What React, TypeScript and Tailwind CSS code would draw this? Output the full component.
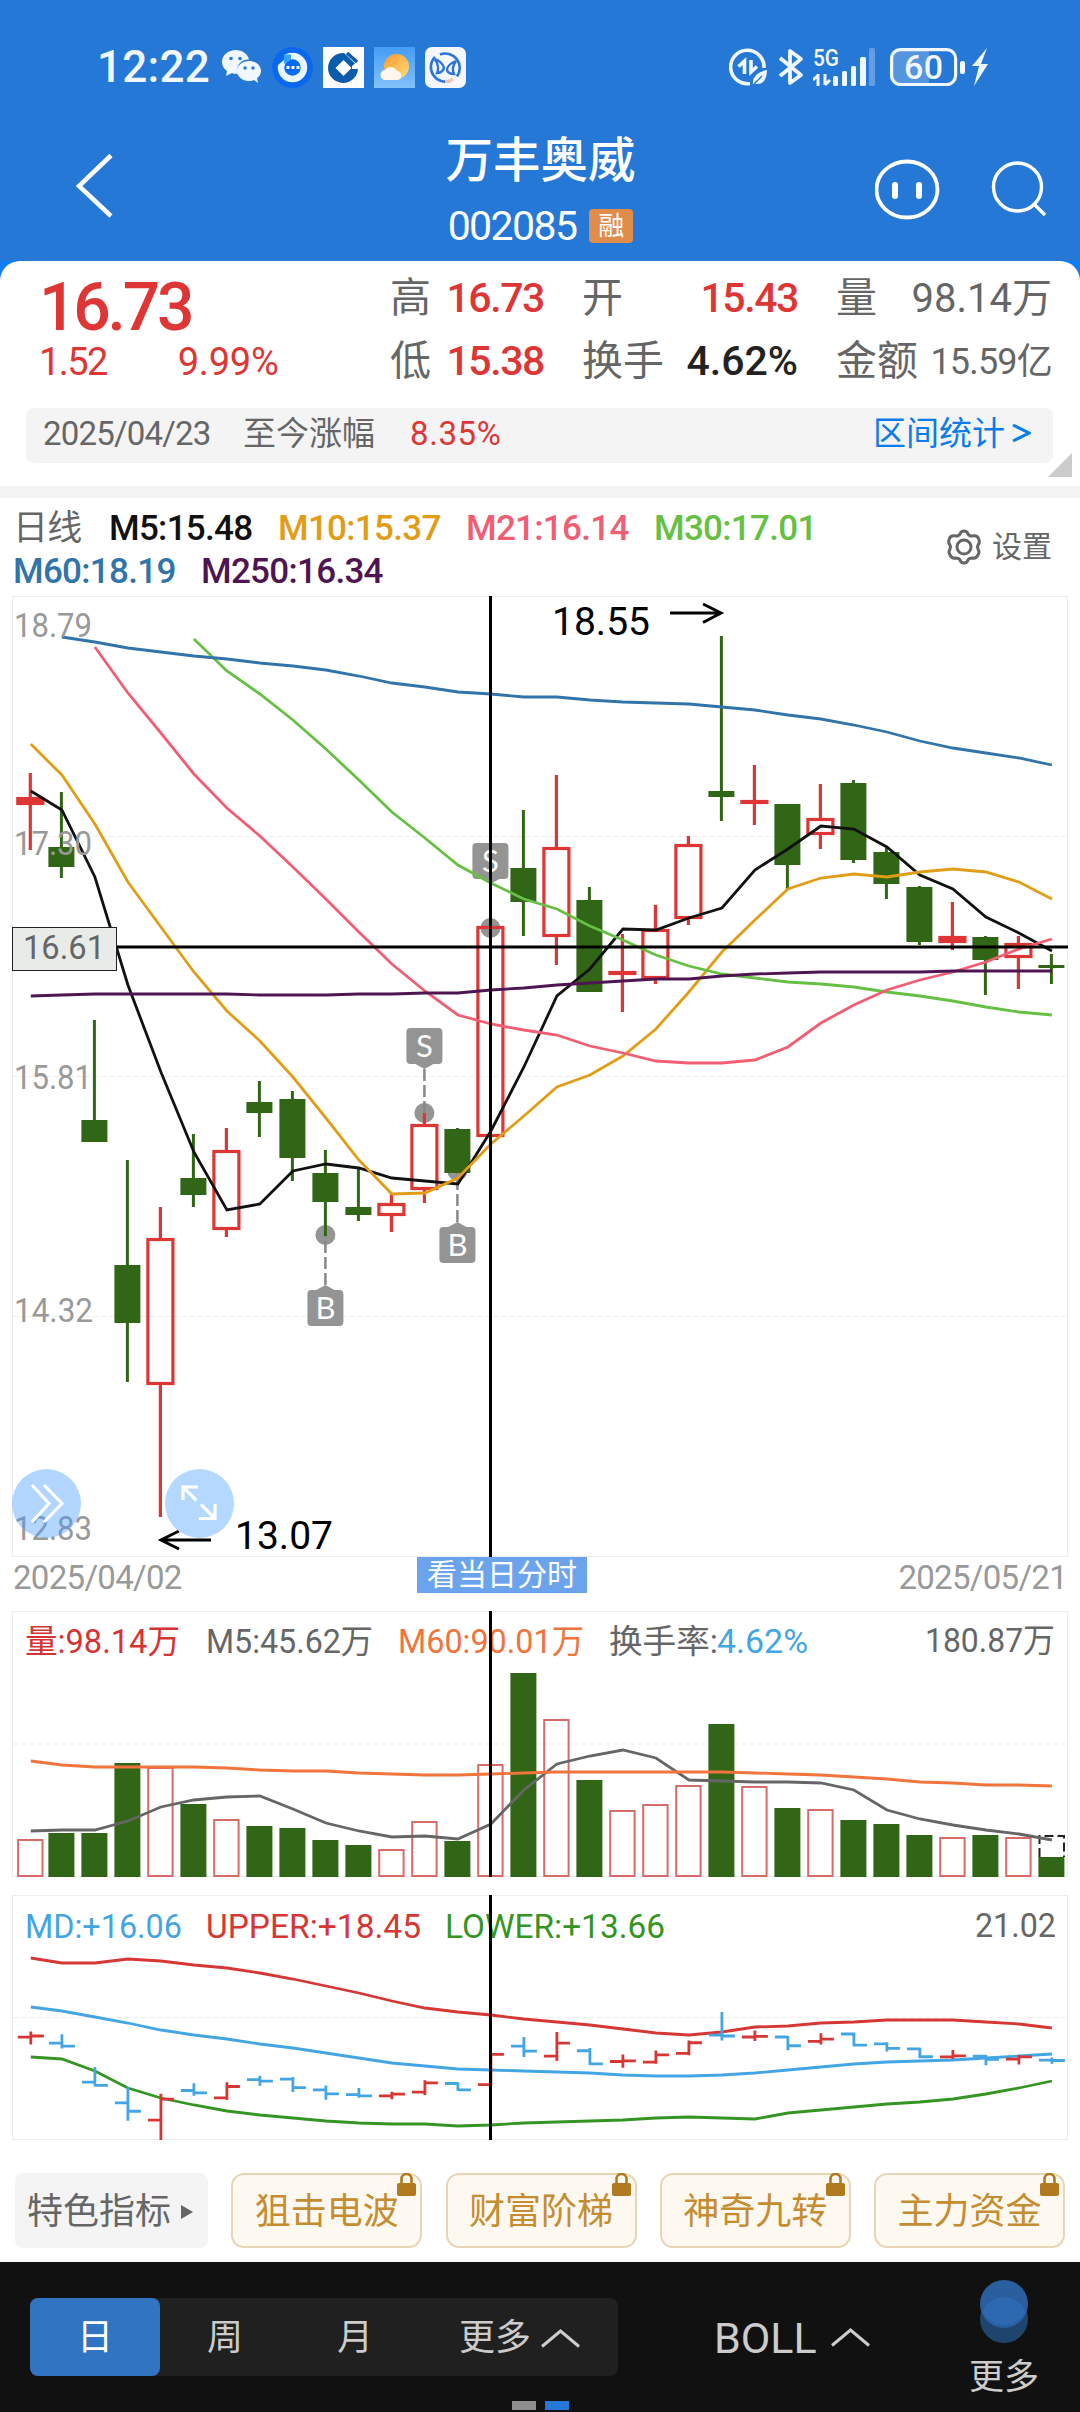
import type { ReactNode } from "react";

// [rising, high, bodyTop, bodyBottom, low] in chart coordinates
type Candle = [boolean, number, number, number, number];

const CANDLES: Candle[] = [
  [true, 773, 797, 805, 850],
  [false, 792, 847, 867, 878],
  [false, 1020, 1120, 1142, 1142],
  [false, 1160, 1265, 1323, 1382],
  [true, 1207, 1238, 1385, 1517],
  [false, 1134, 1178, 1195, 1207],
  [true, 1128, 1150, 1230, 1237],
  [false, 1081, 1102, 1113, 1137],
  [false, 1091, 1099, 1158, 1181],
  [false, 1150, 1173, 1202, 1236],
  [false, 1168, 1207, 1215, 1221],
  [true, 1194, 1203, 1216, 1232],
  [true, 1113, 1124, 1190, 1203],
  [false, 1128, 1129, 1173, 1173],
  [true, 926, 926, 1137, 1137],
  [false, 810, 868, 902, 936],
  [true, 775, 847, 937, 965],
  [false, 887, 900, 992, 992],
  [true, 934, 971, 975, 1012],
  [true, 905, 929, 979, 984],
  [true, 836, 844, 919, 925],
  [false, 636, 791, 797, 821],
  [true, 765, 800, 804, 825],
  [false, 804, 804, 865, 889],
  [true, 784, 818, 835, 849],
  [false, 780, 783, 860, 863],
  [false, 848, 852, 884, 899],
  [false, 886, 887, 942, 945],
  [true, 902, 936, 943, 950],
  [false, 936, 937, 960, 995],
  [true, 936, 943, 958, 989],
  [false, 954, 965, 968, 984],
];

const VOLUME_TOPS = [
  1839, 1833, 1833, 1763, 1767, 1804, 1819, 1826, 1828, 1840, 1845, 1849, 1821, 1841, 1764, 1673,
  1719, 1780, 1810, 1804, 1785, 1724, 1786, 1808, 1809, 1820, 1824, 1835, 1837, 1835, 1837, 1857,
];

interface Series {
  color: string;
  start: number;
  points: number[];
}

const MA_LINES: Series[] = [
  { color: "#111111", start: 0, points: [791, 810, 877, 985, 1072, 1152, 1210, 1204, 1171, 1164, 1168, 1178, 1181, 1184, 1131, 1067, 996, 969, 929, 930, 918, 908, 870, 849, 826, 829, 847, 875, 889, 917, 933, 951] },
  { color: "#e29d17", start: 0, points: [744, 775, 824, 882, 927, 972, 1011, 1041, 1077, 1118, 1160, 1194, 1193, 1178, 1144, 1116, 1087, 1075, 1056, 1029, 992, 952, 920, 889, 878, 874, 877, 872, 869, 872, 882, 899] },
  { color: "#66c043", start: 5, points: [639, 671, 694, 720, 749, 780, 812, 838, 865, 883, 899, 909, 926, 940, 955, 966, 974, 978, 982, 984, 987, 992, 996, 1001, 1007, 1012, 1015] },
  { color: "#f15e73", start: 2, points: [647, 693, 733, 774, 808, 836, 867, 899, 932, 964, 991, 1015, 1024, 1030, 1035, 1046, 1053, 1061, 1063, 1063, 1060, 1047, 1023, 1005, 990, 980, 972, 962, 949, 939] },
  { color: "#3174aa", start: 1, points: [637, 642, 648, 652, 656, 659, 663, 666, 670, 676, 683, 687, 692, 694, 697, 697, 700, 702, 703, 704, 707, 710, 715, 719, 725, 732, 741, 748, 753, 758, 765] },
  { color: "#4e1552", start: 0, points: [996, 995, 994, 994, 994, 994, 994, 995, 995, 995, 994, 994, 993, 993, 990, 988, 985, 983, 981, 979, 979, 976, 974, 973, 972, 972, 972, 972, 971, 971, 971, 971] },
];

const VOLUME_LINES: Series[] = [
  { color: "#666666", start: 0, points: [1831, 1830, 1830, 1821, 1807, 1800, 1797, 1796, 1809, 1823, 1831, 1837, 1836, 1839, 1824, 1790, 1764, 1756, 1750, 1758, 1780, 1781, 1782, 1782, 1783, 1790, 1810, 1819, 1825, 1830, 1834, 1840] },
  { color: "#f0743c", start: 0, points: [1761, 1765, 1767, 1767, 1767, 1767, 1768, 1770, 1771, 1771, 1773, 1774, 1775, 1775, 1774, 1773, 1772, 1772, 1772, 1772, 1772, 1772, 1773, 1774, 1775, 1777, 1779, 1782, 1783, 1785, 1785, 1786] },
];

const BOLL_LINES: Series[] = [
  { color: "#d63634", start: 0, points: [1958, 1963, 1963, 1959, 1961, 1965, 1968, 1973, 1979, 1986, 1993, 2001, 2008, 2012, 2015, 2019, 2022, 2025, 2029, 2033, 2035, 2032, 2027, 2026, 2023, 2022, 2020, 2020, 2020, 2022, 2024, 2028] },
  { color: "#43a5e4", start: 0, points: [2007, 2011, 2017, 2023, 2030, 2035, 2039, 2044, 2048, 2053, 2058, 2063, 2066, 2069, 2070, 2071, 2072, 2073, 2075, 2076, 2076, 2075, 2073, 2070, 2067, 2064, 2062, 2061, 2060, 2058, 2056, 2054] },
  { color: "#359523", start: 0, points: [2057, 2059, 2071, 2088, 2098, 2105, 2111, 2115, 2118, 2121, 2123, 2124, 2124, 2126, 2125, 2123, 2122, 2121, 2120, 2118, 2117, 2118, 2119, 2113, 2110, 2107, 2104, 2102, 2099, 2094, 2088, 2081] },
];

const RED = "#de3535";
const GREEN = "#306615";
const FONT = "Roboto, 'Noto Sans CJK SC', sans-serif";
const CURSOR_X = 490.5;

// the first column sits slightly right of the even 33px pitch
const xAt = (i: number) => (i === 0 ? 30.3 : 28.4 + 33 * i);
const bollY = (y: number) => 2013 + 0.143 * (y - 636);

function Lines({ series }: { series: Series[] }) {
  return (
    <>
      {series.map((s) => (
        <polyline
          key={s.color}
          fill="none"
          stroke={s.color}
          strokeWidth={2.8}
          points={s.points.map((y, i) => `${xAt(i + s.start) + 0.5},${y}`).join(" ")}
        />
      ))}
    </>
  );
}

interface LabelProps {
  x: number;
  y: number;
  width: number;
  size?: number;
  fill: string;
  weight?: number;
  children: ReactNode;
}

function Label({ x, y, width, size = 33, fill, weight = 400, children }: LabelProps) {
  return (
    <text x={x} y={y} fontSize={size} fill={fill} fontWeight={weight} fontFamily={FONT} textLength={width} lengthAdjust="spacingAndGlyphs">
      {children}
    </text>
  );
}

function Frame({ top, height, grid }: { top: number; height: number; grid: number[] }) {
  return (
    <>
      <rect x={12.5} y={top + 0.5} width={1055} height={height - 1} fill="none" stroke="#ececec" />
      {grid.map((y) => (
        <line key={y} x1={13} x2={1067} y1={y} y2={y} stroke="#ededed" strokeDasharray="5 3" />
      ))}
    </>
  );
}

function TradeMark({ index, kind, dot, box }: { index: number; kind: "B" | "S"; dot: number; box: number }) {
  const x = xAt(index);
  const edge = kind === "S" ? box + 36 : box;
  const tip = kind === "S" ? edge + 5 : edge - 5;
  return (
    <g>
      <circle cx={x} cy={dot} r={10} fill="#949494" />
      {index !== 14 && (
        <line x1={x} x2={x} y1={tip} y2={dot} stroke="#888888" strokeWidth={2.5} strokeDasharray="12 4" />
      )}
      <path d={`M${x - 9} ${edge}L${x} ${tip}L${x + 9} ${edge}z`} fill="#949494" />
      <rect x={x - 18} y={box} width={36} height={36} rx={4} fill="#949494" />
      <text x={x} y={box + 29} textAnchor="middle" fontSize={31} fill="#fff" fontFamily="Lato, sans-serif">
        {kind}
      </text>
    </g>
  );
}

function PriceChart() {
  return (
    <svg className="block h-[961px] w-[1080px]" viewBox="0 596 1080 961">
      <Frame top={596} height={961} grid={[836.5, 1076.5, 1316.5]} />
      <TradeMark index={9} kind="B" dot={1235} box={1290} />
      <TradeMark index={12} kind="S" dot={1113} box={1028} />
      <TradeMark index={13} kind="B" dot={1171} box={1227} />
      <TradeMark index={14} kind="S" dot={928} box={843} />
      {CANDLES.map(([up, high, top, bottom, low], i) => {
        const x = xAt(i);
        if (up) {
          const thin = bottom - top < 9;
          return (
            <g key={i} stroke={RED} strokeWidth={3.2}>
              <path d={`M${x} ${high}V${top}M${x} ${bottom}V${low}`} />
              <rect x={x - 12.5} y={top + 1.5} width={25} height={Math.max(bottom - top - 3, 1)} fill={thin ? RED : "none"} />
            </g>
          );
        }
        return (
          <g key={i} fill={GREEN}>
            <rect x={x - 1.5} y={high} width={3} height={low - high} />
            <rect x={x - 13} y={top} width={26} height={bottom - top} />
          </g>
        );
      })}
      <Lines series={MA_LINES} />
      <Label x={14} y={637} width={78} fill="#999">18.79</Label>
      <Label x={14} y={855} width={78} fill="#999">17.30</Label>
      <Label x={14} y={1089} width={78} fill="#999">15.81</Label>
      <Label x={14} y={1322} width={79} fill="#999">14.32</Label>
      <Label x={14} y={1540} width={78} fill="#999">12.83</Label>
      <Label x={552} y={635} width={98} size={39} fill="#000">18.55</Label>
      <path d="M670 613H721M703 604L721 613L703 622.5" fill="none" stroke="#000" strokeWidth={3} />
      <path d="M211 1540H161M179 1531L161 1540L179 1549" fill="none" stroke="#000" strokeWidth={3} />
      <Label x={235} y={1549} width={98} size={39} fill="#000">13.07</Label>
      <line x1={117} x2={1068} y1={947} y2={947} stroke="#000" strokeWidth={3} />
      <line x1={CURSOR_X} x2={CURSOR_X} y1={596} y2={1557} stroke="#000" strokeWidth={3} />
      <rect x={12.5} y={927.5} width={104} height={43} fill="#e9ebe8" stroke="#222" />
      <Label x={23} y={959} width={82} size={34} fill="#666">16.61</Label>
      <circle cx={46.5} cy={1503.5} r={34.5} fill="#3f98ff" fillOpacity={0.4} />
      <path d="M32 1485L49 1503.5L32 1522M44 1485L62 1503.5L44 1522" fill="none" stroke="#fff" strokeWidth={3.2} />
      <circle cx={199.5} cy={1503.5} r={34.5} fill="#b4d8ff" />
      <path d="M183 1500V1487H198M183 1487L196.500 1500.500M215 1504V1518.500H199M201 1504.500L215 1518.500" fill="none" stroke="#fff" strokeWidth={3.2} />
    </svg>
  );
}

function VolumeChart() {
  return (
    <svg className="block h-[266px] w-[1080px]" viewBox="0 1611 1080 266">
      <Frame top={1611} height={266} grid={[1744]} />
      {VOLUME_TOPS.map((top, i) => {
        const x = xAt(i);
        return CANDLES[i][0] ? (
          <rect key={i} x={x - 12.2} y={top + 1} width={24.4} height={1875 - top} fill="none" stroke="#d96a6a" strokeWidth={2} />
        ) : (
          <rect key={i} x={x - 13} y={top} width={26} height={1877 - top} fill={GREEN} />
        );
      })}
      <path d="M1039.500 1857V1836H1064V1857" fill="none" stroke="#222" strokeWidth={2} strokeDasharray="9 4" />
      <Lines series={VOLUME_LINES} />
      <Label x={25} y={1653} width={155} fill="#d63434">量:98.14万</Label>
      <Label x={206} y={1653} width={167} fill="#666">M5:45.62万</Label>
      <Label x={398} y={1653} width={186} fill="#f0743c">M60:90.01万</Label>
      <Label x={609} y={1653} width={109} fill="#666">换手率:</Label>
      <Label x={717} y={1653} width={91} fill="#43a5e4">4.62%</Label>
      <Label x={925} y={1652} width={130} fill="#666">180.87万</Label>
      <line x1={CURSOR_X} x2={CURSOR_X} y1={1611} y2={1877} stroke="#000" strokeWidth={3} />
    </svg>
  );
}

function BollChart() {
  return (
    <svg className="block h-[245px] w-[1080px]" viewBox="0 1895 1080 245">
      <Frame top={1895} height={245} grid={[2017.5]} />
      <Lines series={BOLL_LINES} />
      {CANDLES.map(([up, high, top, bottom, low], i) => {
        const x = xAt(i) + 0.5;
        const open = bollY(up ? bottom : top);
        const close = bollY(up ? top : bottom);
        return (
          <path
            key={i}
            d={`M${x - 13} ${open}H${x}M${x} ${close}H${x + 13}M${x} ${bollY(high) - 1}V${bollY(low) + 1}`}
            stroke={up ? "#d63634" : "#43a5e4"}
            strokeWidth={2.8}
          />
        );
      })}
      <Label x={25} y={1938} width={157} fill="#43a5e4">MD:+16.06</Label>
      <Label x={206} y={1938} width={215} fill="#d63634">UPPER:+18.45</Label>
      <Label x={445} y={1938} width={220} fill="#359523">LOWER:+13.66</Label>
      <Label x={975} y={1937} width={81} fill="#666">21.02</Label>
      <line x1={CURSOR_X} x2={CURSOR_X} y1={1895} y2={2140} stroke="#000" strokeWidth={3} />
    </svg>
  );
}

function StatusBar() {
  return (
    <div className="flex h-[134px] items-center pl-[97px] pr-[90px] text-[#f1f7ff]">
      <span className="w-[125px] text-[44px] font-medium leading-none tracking-[0.3px]">12:22</span>
      <svg className="mr-[11px] h-[34px] w-[39px]" viewBox="0 0 39 34" fill="#f1f7ff">
        <path d="M14 0C6 0 0 5 0 12c0 4 2 7 5 9l-1 5 6-3c2 1 4 1 6 .500C13 15 20 9 27 9.500 26 4 20 0 14 0z" />
        <path d="M27 11c-7 0-12 4.500-12 10s5 10 12 10c2 0 3.500-.300 5-1l4 3-1-5c3-2 4-4.500 4-7 0-5.500-5-10-12-10z" />
        <g fill="#2578d5">
          <circle cx="9" cy="8.500" r="1.800" />
          <circle cx="18" cy="8.500" r="1.800" />
          <circle cx="23" cy="18" r="1.700" />
          <circle cx="31" cy="18" r="1.700" />
        </g>
      </svg>
      <svg className="mr-[10px] size-[41px]" viewBox="0 0 41 41">
        <circle cx="20.500" cy="20.500" r="20.500" fill="#0868ee" />
        <circle cx="20.500" cy="20.500" r="11.500" fill="none" stroke="#e8f4ff" strokeWidth="6.500" />
        <path d="M12 7.500H19V13L12 17z" fill="#39a0ff" />
        <path d="M5.500 7H12V13L6 18z" fill="#0868ee" />
        <path d="M14.500 20.500h3M19.500 20.500h3M24.500 20.500h3" stroke="#fff" strokeWidth="3" />
      </svg>
      <svg className="mr-[10px] size-[41px]" viewBox="0 0 41 41">
        <path fill="#fff" d="M0 0h41v41H0z" />
        <path d="M35 22A15 15 0 1 1 21 6L32 16.500L29 19V22z" fill="#0b5dab" />
        <path d="M20.500 13L28.500 21L20.500 29L12.500 21z" fill="#fff" />
        <path d="M24 6L34 15" stroke="#0b5dab" strokeWidth="3.500" />
      </svg>
      <svg className="mr-[10px] size-[41px]" viewBox="0 0 41 41">
        <defs>
          <linearGradient id="sky" x2="0" y2="1">
            <stop stopColor="#459df5" />
            <stop offset="1" stopColor="#83c2fb" />
          </linearGradient>
          <linearGradient id="sun" x2="1" y2="1">
            <stop stopColor="#ff9a2e" />
            <stop offset="1" stopColor="#ffdc7a" />
          </linearGradient>
        </defs>
        <path fill="url(#sky)" d="M0 0h41v41H0z" />
        <circle cx="22.500" cy="19.500" r="12.500" fill="url(#sun)" />
        <path d="M12 33a5 5 0 0 1-1-10 7 7 0 0 1 12 1 4.500 4.500 0 0 1 0 9z" fill="#fff6ec" />
      </svg>
      <svg className="size-[41px]" viewBox="0 0 41 41">
        <rect width="41" height="41" rx="7" fill="#f4f7fc" />
        <path d="M15 7.500a14.500 14.500 0 0 1 17 22M26 33.500A14.500 14.500 0 0 1 10 10" fill="none" stroke="#2e73da" strokeWidth="2.600" />
        <path d="M10 12c5 2 8 5 9 9-1 3-3 5-7 5q3-6-2-14M31 14c-5 2-9 5-9 9 1 3 3 4 7 4q-3-6 2-13" fill="none" stroke="#2e73da" strokeWidth="2.400" />
        <path d="M20 34.500q5 0 8-2.500" stroke="#f2c7ad" strokeWidth="3" fill="none" />
      </svg>
      <svg className="ml-auto mr-[11px] h-[38px] w-[38px]" viewBox="0 0 38 38" fill="none" stroke="#f1f7ff">
        <path d="M21 35.500A16.700 16.700 0 1 1 35 20" strokeWidth="3.600" />
        <path d="M15.500 26V13L9.500 18.500M22 12v12l6-5.500" strokeWidth="3.600" />
        <path d="M24 36q-1-11 14-14-.500 15-11 14z" fill="#f1f7ff" stroke="none" />
        <path d="M25 36l8-8" stroke="#2578d5" strokeWidth="1.500" />
      </svg>
      <svg className="mr-[9px] h-[38px] w-[26px]" viewBox="0 0 26 38">
        <path d="M2 10L23 27L12 35V3L23 11L2 28" fill="none" stroke="#f1f7ff" strokeWidth="3.800" strokeLinejoin="round" />
      </svg>
      <svg className="mr-[15px] h-[54px] w-[62px]" viewBox="0 -8 62 54" fill="#f1f7ff">
        <text x="0" y="18" fontSize="24" fontWeight="500" fontFamily={FONT} textLength="26" lengthAdjust="spacingAndGlyphs">5G</text>
        <path d="M5 26v12M0 32l5.500-5M12 26v11M12 37l5-5" stroke="#f1f7ff" strokeWidth="3" />
        <rect x="20" y="28" width="5" height="10" rx="1.500" />
        <rect x="29" y="23" width="5" height="15" rx="1.500" />
        <rect x="38" y="18" width="5" height="20" rx="1.500" />
        <rect x="47" y="9" width="6" height="29" rx="1.500" />
        <rect x="56" y="0" width="6" height="38" rx="1.500" opacity="0.300" />
      </svg>
      <svg className="h-[38px] w-[100px]" viewBox="0 0 100 38">
        <path d="M10 2h29v34H10a8 8 0 0 1-8-8V10a8 8 0 0 1 8-8z" fill="#fff" opacity="0.220" />
        <rect x="1.600" y="1.600" width="64" height="35" rx="9" fill="none" stroke="#f1f7ff" strokeWidth="3.200" />
        <text x="14" y="31" fontSize="34" fontWeight="500" fill="#f1f7ff" fontFamily={FONT} textLength="39">60</text>
        <rect x="70" y="13" width="5" height="13" rx="2" fill="#f1f7ff" />
        <path d="M97 0L82 18h7l-5 20 14-22h-7z" fill="#f1f7ff" />
      </svg>
    </div>
  );
}

function TitleBar() {
  return (
    <div className="flex h-[127px] items-start justify-between pl-[76px] pr-[33px] text-white">
      <svg className="mt-[19px] h-[66px] w-[295px]" viewBox="0 0 295 66">
        <path d="M35 2.500L3 33L35 63" fill="none" stroke="#fff" strokeWidth="4.500" />
      </svg>
      <div className="flex flex-col items-center">
        <h1 className="text-[47.500px] font-medium leading-[54px]">万丰奥威</h1>
        <div className="mt-[16px] flex items-center gap-[13px]">
          <span className="text-[41px] leading-[44px] tracking-[-1.600px]">002085</span>
          <span className="flex h-[34px] w-[44px] items-center justify-center rounded-sm bg-[#e08c4a] text-[26px] leading-none">融</span>
        </div>
      </div>
      <div className="flex w-[337px] justify-end">
        <svg className="mt-[25px] h-[61px] w-[172px]" viewBox="0 0 172 61" fill="none" stroke="#fff">
          <ellipse cx="32" cy="30.500" rx="30.500" ry="28" strokeWidth="3.800" />
          <path d="M20 26v11M44 26v11" strokeWidth="6" strokeLinecap="round" />
          <circle cx="142.500" cy="28" r="24" strokeWidth="3.400" />
          <path d="M159 45L170 56" strokeWidth="3.400" />
        </svg>
      </div>
    </div>
  );
}

interface StatProps {
  label: string;
  value: string;
  tone: string;
}

function Stat({ label, value, tone }: StatProps) {
  return (
    <div className="flex h-[63px] items-center justify-between whitespace-nowrap text-[41px] leading-none text-[#666]">
      <span>{label}</span>
      <span className={tone}>{value}</span>
    </div>
  );
}

function QuotePanel() {
  return (
    <section className="bg-[#0d7ef5]">
      <div className="h-[225px] rounded-t-[20px] bg-white">
        <div className="flex h-[147px] pt-[6px]">
          <div className="w-[390px] pl-[39px] text-[#de3535]">
            <p className="pt-[5px] text-[66px] font-medium leading-[72px] tracking-[-3.200px]">16.73</p>
            <p className="flex gap-[71px] text-[38px] leading-[37px]">
              <span className="tracking-[-1.600px]">1.52</span>
              <span className="tracking-[-0.200px]">9.99%</span>
            </p>
          </div>
          <div className="w-[154px]">
            <Stat label="高" value="16.73" tone="tracking-[-1.400px] font-medium text-[#de3535]" />
            <Stat label="低" value="15.38" tone="tracking-[-1.400px] font-medium text-[#de3535]" />
          </div>
          <div className="ml-[38px] w-[216px]">
            <Stat label="开" value="15.43" tone="tracking-[-1.400px] font-medium text-[#de3535]" />
            <Stat label="换手" value="4.62%" tone="tracking-[0px] font-medium text-[#222]" />
          </div>
          <div className="ml-[38px] w-[216px]">
            <Stat label="量" value="98.14万" tone="tracking-[0px] text-[40px]" />
            <Stat label="金额" value="15.59亿" tone="tracking-[-0.800px] text-[36px]" />
          </div>
        </div>
        <div className="flex">
          <div className="ml-[26px] flex h-[55px] w-[1027px] items-center rounded-lg bg-[#f4f4f4] pb-[5px] pl-[17px] pr-[22px] text-[33px] leading-none text-[#666]">
            <span className="w-[200px] tracking-[-0.800px]">2025/04/23</span>
            <span className="w-[167px]">至今涨幅</span>
            <span className="tracking-[0.600px] text-[#de3535]">8.35%</span>
            <span className="ml-auto text-[#0b7cea]">区间统计</span>
            <svg className="ml-[7px] h-[20px] w-[19px]" viewBox="0 0 19 20">
              <path d="M1 2L17 10L1 18" fill="none" stroke="#0b7cea" strokeWidth="3" />
            </svg>
          </div>
          <svg className="-ml-[5px] mt-[45px] h-[24px] w-[24px]" viewBox="0 0 24 24">
            <path d="M24 0V24H0z" fill="#ccc" />
          </svg>
        </div>
      </div>
      <div className="h-[12px] bg-[#f4f4f4]" />
    </section>
  );
}

function MaLegend() {
  return (
    <section className="flex h-[98px] justify-between bg-white pl-[13px] pr-[28px]">
      <div className="whitespace-nowrap pt-[9px] text-[35px] font-medium leading-[43px] tracking-[-0.700px]">
        <div className="flex">
          <span className="w-[96px] font-normal text-[#666]">日线</span>
          <span className="w-[169px] text-[#111]">M5:15.48</span>
          <span className="w-[188px] text-[#e29d17]">M10:15.37</span>
          <span className="w-[188px] text-[#f15e73]">M21:16.14</span>
          <span className="text-[#66c043]">M30:17.01</span>
        </div>
        <div className="flex">
          <span className="w-[188px] text-[#3174aa]">M60:18.19</span>
          <span className="text-[#4e1552]">M250:16.34</span>
        </div>
      </div>
      <div className="flex items-center gap-[10px] text-[30px] leading-none text-[#666]">
        <svg className="h-[36px] w-[36px]" viewBox="0 0 36 36" fill="none" stroke="#666" strokeWidth="3">
          <path d="M18 2q3 0 4 3 1 2 4 2 6-1 7 4 1 3-1 5-1 2 0 4 2 3 0 6-2 4-6 3-3 0-4 2-1 3-4 3t-4-3q-1-2-4-2-4 1-6-3-2-3 0-6 1-2 0-4-2-2-1-5 1-5 7-4 3 0 4-2 1-3 4-3z" strokeLinejoin="round" />
          <circle cx="18" cy="18" r="7" />
        </svg>
        设置
      </div>
    </section>
  );
}

function LockedButton({ children }: { children: ReactNode }) {
  return (
    <button className="relative h-[75px] w-[191px] rounded-[13px] border-2 border-[#e8d5b5] bg-[#fdf9f1] pt-[2px] text-[36px] leading-none text-[#c58c30]">
      {children}
      <svg className="absolute -top-[2px] right-[4px] h-[23px] w-[19px]" viewBox="0 0 19 23">
        <path d="M4.500 11V6a5 5 0 0 1 10 0v5" fill="none" stroke="#b17a20" strokeWidth="2.600" />
        <rect y="10" width="19" height="13" rx="2" fill="#b17a20" />
      </svg>
    </button>
  );
}

function Caret() {
  return (
    <svg className="h-[19px] w-[39px]" viewBox="0 0 39 19">
      <path d="M1 17.500L19.500 2L38 17.500" fill="none" stroke="#ccc" strokeWidth="3" />
    </svg>
  );
}

function BottomBar() {
  return (
    <footer className="h-[150px] overflow-hidden bg-[#111]">
      <div className="flex h-[139px] pl-[30px] text-[36px] leading-none text-[#ccc]">
        <div className="mt-[36px] flex h-[78px] w-[588px] items-center rounded-lg bg-[#202020]">
          <button className="h-[78px] w-[130px] rounded-lg bg-[#3074c2] pt-[2px] text-white">日</button>
          <button className="w-[130px] pt-[2px]">周</button>
          <button className="w-[130px] pt-[2px]">月</button>
          <button className="ml-[39px] flex items-center gap-[10px] pt-[2px]">
            更多
            <Caret />
          </button>
        </div>
        <button className="ml-[96px] mt-[36px] flex h-[78px] items-center gap-[10px] text-[43px]">
          <span className="w-[107px] pt-[2px] text-left">BOLL</span>
          <Caret />
        </button>
        <button className="ml-[96px] flex w-[76px] flex-col items-center pt-[18px]">
          <svg className="h-[63px] w-[48px] shrink-0" viewBox="0 0 48 63">
            <circle cx="24" cy="39" r="24" fill="#1f456e" />
            <circle cx="24" cy="24" r="24" fill="#295f9f" />
            <path d="M2.500 32a23 23 0 0 1 43 0A24 24 0 0 1 2.500 32z" fill="#2c69b1" />
          </svg>
          <span className="mt-[17px] text-[35px]">更多</span>
        </button>
      </div>
      <div className="flex justify-center gap-[9px]">
        <i className="h-[9px] w-[24px] bg-[#8e8e8e]" />
        <i className="h-[9px] w-[24px] bg-[#2578d5]" />
      </div>
    </footer>
  );
}

export default function App() {
  return (
    <main className="h-[2412px] w-[1080px] overflow-hidden bg-white font-[Roboto,'Noto_Sans_CJK_SC',sans-serif]">
      <header className="bg-[#2578d5]">
        <StatusBar />
        <TitleBar />
      </header>
      <QuotePanel />
      <MaLegend />
      <PriceChart />
      <div className="flex h-[54px] items-start justify-between pl-[13px] pr-[13px] text-[33px] text-[#999]">
        <span className="w-[404px] leading-[42px] tracking-[-0.700px]">2025/04/02</span>
        <span className="flex h-[36px] w-[170px] items-center justify-center bg-[#6ba4ec] text-[30px] leading-none text-white">看当日分时</span>
        <span className="w-[480px] text-right leading-[42px] tracking-[-0.700px]">2025/05/21</span>
      </div>
      <VolumeChart />
      <div className="h-[18px]" />
      <BollChart />
      <nav className="flex h-[122px] items-start justify-between pl-[15px] pr-[15px] pt-[33px]">
        <button className="flex h-[75px] w-[193px] items-center rounded-lg bg-[#f4f4f4] pl-[12px] pt-[2px] text-[36px] leading-none text-[#666]">
          特色指标
          <svg className="ml-[10px] h-[14px] w-[12px]" viewBox="0 0 12 14">
            <path d="M0 0L12 7L0 14z" fill="#666" />
          </svg>
        </button>
        <LockedButton>狙击电波</LockedButton>
        <LockedButton>财富阶梯</LockedButton>
        <LockedButton>神奇九转</LockedButton>
        <LockedButton>主力资金</LockedButton>
      </nav>
      <BottomBar />
    </main>
  );
}
